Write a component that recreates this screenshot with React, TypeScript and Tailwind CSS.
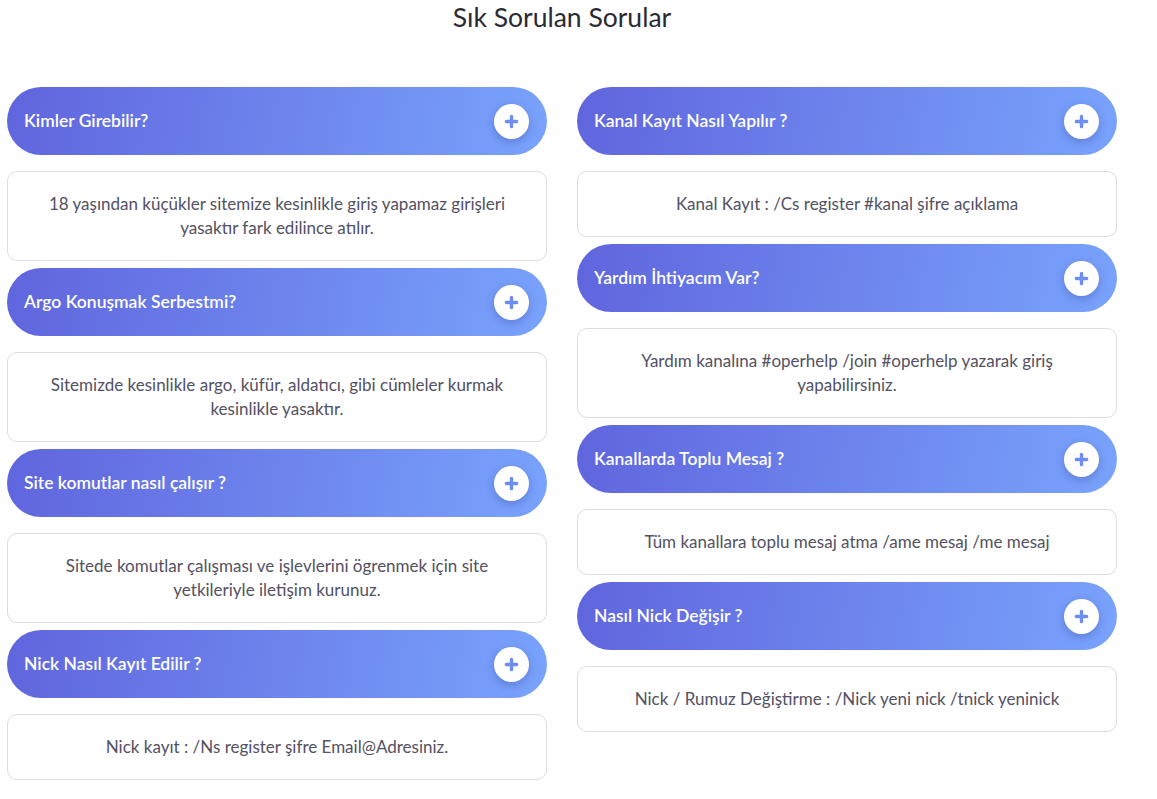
import React from 'react';

type Soru = { baslik: string; cevap: string };

const solSorular: Soru[] = [
  {
    baslik: 'Kimler Girebilir?',
    cevap: '18 yaşından küçükler sitemize kesinlikle giriş yapamaz girişleri yasaktır fark edilince atılır.',
  },
  {
    baslik: 'Argo Konuşmak Serbestmi?',
    cevap: 'Sitemizde kesinlikle argo, küfür, aldatıcı, gibi cümleler kurmak kesinlikle yasaktır.',
  },
  {
    baslik: 'Site komutlar nasıl çalışır ?',
    cevap: 'Sitede komutlar çalışması ve işlevlerini ögrenmek için site yetkileriyle iletişim kurunuz.',
  },
  {
    baslik: 'Nick Nasıl Kayıt Edilir ?',
    cevap: 'Nick kayıt : /Ns register şifre Email@Adresiniz.',
  },
];

const sagSorular: Soru[] = [
  {
    baslik: 'Kanal Kayıt Nasıl Yapılır ?',
    cevap: 'Kanal Kayıt : /Cs register #kanal şifre açıklama',
  },
  {
    baslik: 'Yardım İhtiyacım Var?',
    cevap: 'Yardım kanalına #operhelp /join #operhelp yazarak giriş yapabilirsiniz.',
  },
  {
    baslik: 'Kanallarda Toplu Mesaj ?',
    cevap: 'Tüm kanallara toplu mesaj atma /ame mesaj /me mesaj',
  },
  {
    baslik: 'Nasıl Nick Değişir ?',
    cevap: 'Nick / Rumuz Değiştirme : /Nick yeni nick /tnick yeninick',
  },
];

function SoruKart({ soru }: { soru: Soru }) {
  return (
    <div className="flex flex-col">
      {/* Başlık */}
      <div className="flex items-center justify-between h-[68px] rounded-full pl-[17px] pr-[18px] bg-[linear-gradient(100deg,#6065dd,#79a3fc)]">
        <span className="text-white text-[17.5px] font-semibold">{soru.baslik}</span>
        <span className="flex items-center justify-center w-[35px] h-[35px] rounded-full bg-white shadow-[0_3px_8px_rgba(40,50,140,0.3)]">
          <svg width="15" height="15" viewBox="0 0 16 16">
            <path d="M8 2.5v11M2.5 8h11" stroke="#6d8df2" strokeWidth="3.6" strokeLinecap="round" />
          </svg>
        </span>
      </div>
      {/* Cevap */}
      <div className="mt-4 mb-[7px] rounded-[10px] border border-[#dddddd] bg-white px-10 py-5 text-center text-[17px] leading-[24px] text-[#535163]">
        {soru.cevap}
      </div>
    </div>
  );
}

export default function App() {
  return (
    <div className="min-h-screen bg-white font-['Lato','Noto_Sans',sans-serif]">
      <div className="pl-[7px] pr-[40px]">
        <h2 className="pt-[2px] text-center text-[26.5px] leading-[30px] text-[#2a2a34]">Sık Sorulan Sorular</h2>

        <div className="grid grid-cols-2 gap-[30px] mt-[55px]">
          <div className="flex flex-col">
            {solSorular.map((s) => (
              <SoruKart key={s.baslik} soru={s} />
            ))}
          </div>
          <div className="flex flex-col">
            {sagSorular.map((s) => (
              <SoruKart key={s.baslik} soru={s} />
            ))}
          </div>
        </div>
      </div>
    </div>
  );
}
